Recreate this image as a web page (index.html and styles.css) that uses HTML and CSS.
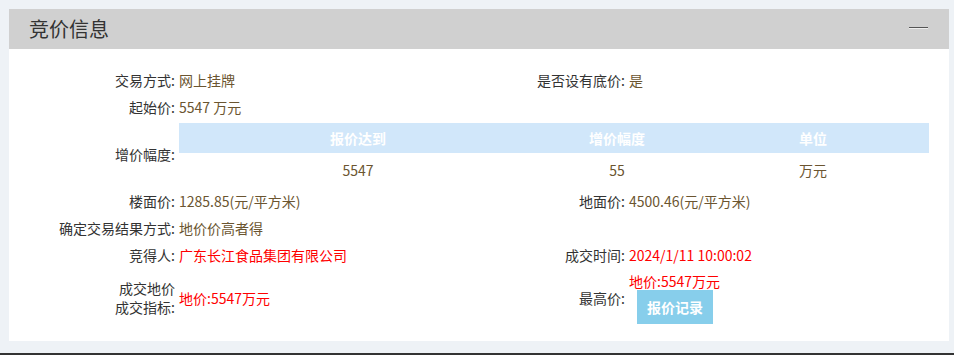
FILE: index.html
```html
<!DOCTYPE html>
<html lang="zh-CN">
<head>
  <meta charset="UTF-8" />
  <meta name="viewport" content="width=device-width, initial-scale=1.0" />
  <title>竞价信息</title>
  <link rel="stylesheet" href="styles.css">
</head>
<body>
  <div class="contenedor">
    <section class="panel">
      <div class="panel-titulo">
        <h2>竞价信息</h2>
        <span class="plegar" title="收起"></span>
      </div>

      <!-- datos de la subasta -->
      <table class="info">
        <colgroup>
          <col class="c-etiqueta">
          <col class="c-valor">
          <col class="c-etiqueta2">
          <col>
        </colgroup>
        <tr class="f26">
          <th>交易方式:</th>
          <td>网上挂牌</td>
          <th>是否设有底价:</th>
          <td>是</td>
        </tr>
        <tr class="f27">
          <th>起始价:</th>
          <td colspan="3">5547 万元</td>
        </tr>
        <tr>
          <th>增价幅度:</th>
          <td colspan="3" class="celda-tabla">
            <table class="incremento">
              <colgroup>
                <col class="i1">
                <col class="i2">
                <col>
              </colgroup>
              <thead>
                <tr>
                  <th>报价达到</th>
                  <th>增价幅度</th>
                  <th>单位</th>
                </tr>
              </thead>
              <tbody>
                <tr>
                  <td>5547</td>
                  <td>55</td>
                  <td>万元</td>
                </tr>
              </tbody>
            </table>
          </td>
        </tr>
        <tr class="f26">
          <th>楼面价:</th>
          <td>1285.85(元/平方米)</td>
          <th>地面价:</th>
          <td>4500.46(元/平方米)</td>
        </tr>
        <tr class="f27">
          <th>确定交易结果方式:</th>
          <td colspan="3">地价价高者得</td>
        </tr>
        <tr class="f27">
          <th>竞得人:</th>
          <td class="rojo">广东长江食品集团有限公司</td>
          <th>成交时间:</th>
          <td class="rojo">2024/1/11 10:00:02</td>
        </tr>
        <tr class="f60">
          <th class="dos-lineas">成交地价<br>成交指标:</th>
          <td class="rojo">地价:5547万元</td>
          <th>最高价:</th>
          <td>
            <div class="rojo">地价:5547万元</div>
            <button class="btn-registro">报价记录</button>
          </td>
        </tr>
      </table>
    </section>
  </div>
  <div class="linea-pie"></div>
</body>
</html>
```

FILE: styles.css
```css
body {
  font-family: "Noto Sans CJK SC", "Liberation Sans", sans-serif;
  background-color: #eef2f6;
  margin: 0;
  padding: 0;
  font-size: 14px;
  line-height: 18px;
  color: #333;
}

.contenedor {
  padding: 9px 5px 12px 9px;
}

.panel {
  width: 940px;
  background-color: #fff;
  padding-bottom: 13px;
}

.panel-titulo {
  height: 40px;
  background-color: #d0d0d0;
  padding: 0 21px 0 20px;
  display: flex;
  justify-content: space-between;
  align-items: center;
}

.panel-titulo h2 {
  margin: 0;
  font-size: 20px;
  font-weight: normal;
  color: #333;
  line-height: 24px;
}

.plegar {
  width: 19px;
  height: 0;
  border-top: 1px solid #555;
  border-bottom: 1px solid #eee;
  margin-bottom: 2px;
}

.info {
  width: 940px;
  border-collapse: collapse;
  border-spacing: 0;
  margin-top: 18px;
  table-layout: fixed;
}

.c-etiqueta { width: 168px; }
.c-valor { width: 300px; }
.c-etiqueta2 { width: 150px; }

.info > tbody > tr > th,
.info > tr > th {
  text-align: right;
  font-weight: normal;
  color: #333;
  padding: 0 2px 0 0;
  vertical-align: middle;
}

.info th.dos-lineas {
  line-height: 19px;
}

.info td {
  padding: 0 0 0 2px;
  color: #6b5530;
  vertical-align: middle;
}

.f26 { height: 26px; }
.f27 { height: 27px; }
.f60 { height: 60px; }

.info td.rojo,
.info .rojo {
  color: #ff0000;
}

.info td.celda-tabla {
  padding: 3px 20px 1px 2px;
}

.incremento {
  width: 750px;
  border-collapse: collapse;
  table-layout: fixed;
}

.i1 { width: 358px; }
.i2 { width: 160px; }

.incremento th {
  background-color: #d1e7fa;
  color: #fff;
  font-weight: bold;
  height: 30px;
  padding: 0;
  text-align: center;
}

.incremento td {
  height: 34px;
  padding: 0;
  text-align: center;
  color: #6b5530;
}

.btn-registro {
  display: block;
  margin-left: 8px;
  width: 76px;
  height: 34px;
  border: none;
  background-color: #87ceeb;
  color: #fff;
  font-family: inherit;
  font-size: 14px;
  font-weight: bold;
  padding: 0;
  cursor: pointer;
}

.linea-pie {
  height: 2px;
  background-color: #333;
}
```
